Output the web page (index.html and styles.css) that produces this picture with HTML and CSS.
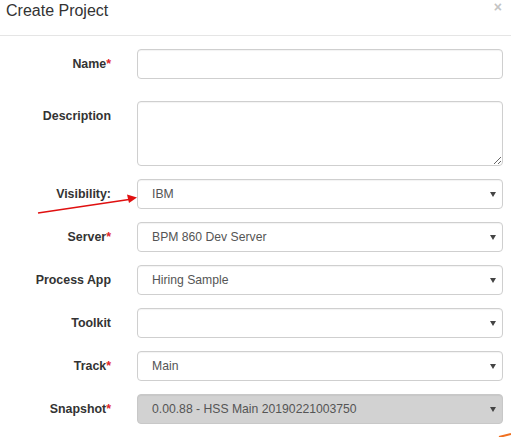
FILE: index.html
```html
<!DOCTYPE html>
<html>
<head>
<meta charset="utf-8">
<link rel="stylesheet" href="styles.css">
</head>
<body>
<div class="modal">
  <div class="modal-header">
    <h4 class="title">Create Project</h4>
    <span class="close">&times;</span>
  </div>
  <form class="form">
    <div class="row row-name">
      <label class="label">Name<span class="req">*</span></label>
      <div class="field"><input class="control" type="text"></div>
    </div>
    <div class="row">
      <label class="label">Description</label>
      <div class="field"><textarea class="control textarea"></textarea></div>
    </div>
    <div class="row">
      <label class="label">Visibility:</label>
      <div class="field"><div class="control select">IBM<span class="caret"></span></div></div>
    </div>
    <div class="row">
      <label class="label">Server<span class="req">*</span></label>
      <div class="field"><div class="control select">BPM 860 Dev Server<span class="caret"></span></div></div>
    </div>
    <div class="row">
      <label class="label">Process App</label>
      <div class="field"><div class="control select">Hiring Sample<span class="caret"></span></div></div>
    </div>
    <div class="row">
      <label class="label">Toolkit</label>
      <div class="field"><div class="control select"><span class="caret"></span></div></div>
    </div>
    <div class="row">
      <label class="label">Track<span class="req">*</span></label>
      <div class="field"><div class="control select">Main<span class="caret"></span></div></div>
    </div>
    <div class="row">
      <label class="label">Snapshot<span class="req">*</span></label>
      <div class="field"><div class="control select disabled">0.00.88 - HSS Main 20190221003750<span class="caret"></span></div></div>
    </div>
  </form>
</div>
<svg class="annot" width="511" height="437" viewBox="0 0 511 437">
  <line x1="38" y1="213" x2="129" y2="199.5" stroke="#e01010" stroke-width="1.6"/>
  <polygon points="137,197.5 127,194.5 129,203" fill="#e01010"/>
  <line x1="499" y1="437" x2="511" y2="434" stroke="#f07020" stroke-width="2"/>
</svg>
</body>
</html>
```
FILE: styles.css
```css
* { box-sizing: border-box; }
html, body {
  margin: 0;
  padding: 0;
  background: #fff;
  font-family: "Liberation Sans", Arial, sans-serif;
  color: #333;
}
.modal {
  width: 511px;
  height: 437px;
  overflow: hidden;
}
.modal-header {
  position: relative;
  height: 36px;
  border-bottom: 1px solid #e5e5e5;
  padding: 0 6px;
}
.title {
  margin: 0;
  font-size: 16px;
  font-weight: normal;
  line-height: 20px;
  padding-top: 1px;
  color: #333;
}
.close {
  position: absolute;
  right: 9px;
  top: 0;
  font-size: 14px;
  font-weight: bold;
  color: #c4c4c4;
  line-height: 14px;
}
.form {
  padding-top: 13px;
}
.row {
  display: flex;
  align-items: flex-start;
  margin-bottom: 13px;
}
.row-name {
  margin-bottom: 22px;
}
.label {
  width: 137px;
  flex: none;
  text-align: right;
  padding-right: 26px;
  padding-top: 7px;
  font-size: 12.4px;
  font-weight: bold;
  line-height: 16px;
  color: #333;
}
.req {
  color: #e0262c;
}
.field {
  width: 366px;
  flex: none;
}
.control {
  display: block;
  width: 100%;
  height: 30px;
  border: 1px solid #cfcfcf;
  border-radius: 4px;
  background: #fff;
  font-family: "Liberation Sans", Arial, sans-serif;
  font-size: 12.2px;
  color: #555;
  padding: 0 14px;
  margin: 0;
  box-shadow: inset 0 1px 1px rgba(0,0,0,0.05);
}
.textarea {
  height: 65px;
  resize: vertical;
}
.select {
  position: relative;
  line-height: 28px;
}
.caret {
  position: absolute;
  right: 6px;
  top: 12px;
  width: 0;
  height: 0;
  border-left: 3px solid transparent;
  border-right: 3px solid transparent;
  border-top: 5px solid #444;
}
.disabled {
  background: #d2d2d2;
  border-color: #c8c8c8;
}
.annot {
  position: absolute;
  left: 0;
  top: 0;
  pointer-events: none;
}
```
